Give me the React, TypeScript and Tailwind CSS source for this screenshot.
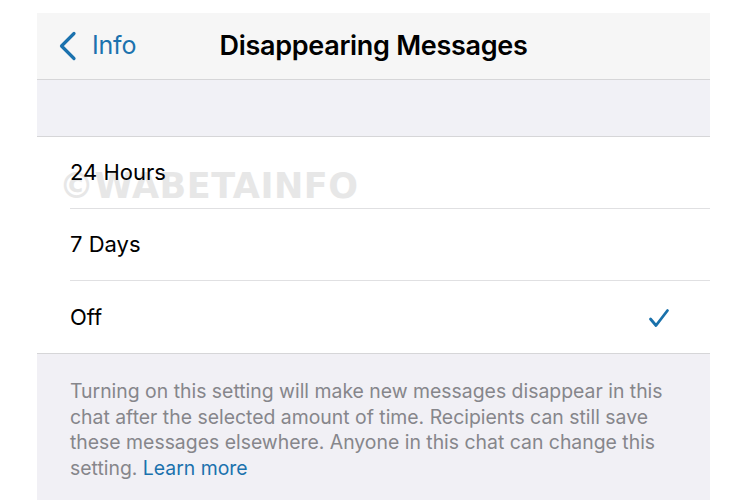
import React from 'react';

const options = ["24 Hours", "7 Days", "Off"];

const App = () => {
  const selected = "Off";

  return (
    <div className="w-[750px] h-[500px] bg-white overflow-hidden pt-[13px] font-['Inter','Noto_Sans',sans-serif]">
      <div className="ml-[37px] w-[673px] h-[487px] flex flex-col">
        {/* nav bar */}
        <div className="h-[67px] bg-[#f6f6f6] border-b border-[#d6d6d8] grid grid-cols-[1fr_auto_1fr] items-center">
          <div className="flex items-center pl-[20px] text-[#1b72ae]">
            <svg width="22" height="30" viewBox="0 0 22 30" fill="none">
              <path d="M17 2.5L4.5 15L17 27.5" stroke="currentColor" strokeWidth="3.2" strokeLinecap="round" strokeLinejoin="round" />
            </svg>
            <span className="ml-[13px] text-[25px] tracking-[-0.2px]">Info</span>
          </div>
          <h1 className="text-[27px] font-semibold text-black tracking-[-0.3px]">Disappearing Messages</h1>
          <div />
        </div>

        {/* spacer */}
        <div className="h-[57px] bg-[#f1f1f6] border-b border-[#d6d6d8]" />

        {/* options */}
        <div className="relative bg-white border-b border-[#d6d6d8]">
          <div className="absolute left-[22px] top-[32px] text-[35px] font-bold tracking-[0.5px] text-[#e7e7e7] pointer-events-none select-none leading-none font-['DejaVu_Sans',sans-serif]">
            ©WABETAINFO
          </div>
          {options.map((opt, i) => (
            <div key={opt} className="relative pl-[33px]">
              <div className={`h-[72px] flex items-center pr-[40px] ${i < options.length - 1 ? "border-b border-[#e0e0e2]" : ""}`}>
                <span className="flex-1 text-[22px] text-black">{opt}</span>
                {opt === selected && (
                  <svg width="22" height="20" viewBox="0 0 22 20" fill="none" className="text-[#1a71ab] mt-[2px]">
                    <path d="M2.5 11L8 17.5L19.5 2.5" stroke="currentColor" strokeWidth="2.8" strokeLinecap="round" strokeLinejoin="round" />
                  </svg>
                )}
              </div>
            </div>
          ))}
        </div>

        {/* footer */}
        <div className="flex-1 bg-[#f1f0f5] px-[33px] pt-[25px]">
          <p className="text-[19.4px] leading-[25.7px] text-[#86868b]">
            Turning on this setting will make new messages disappear in this chat after the selected amount of time. Recipients can still save these messages elsewhere. Anyone in this chat can change this setting.{" "}
            <span className="text-[#1b72ae]">Learn more</span>
          </p>
        </div>
      </div>
    </div>
  );
};

export default App;
